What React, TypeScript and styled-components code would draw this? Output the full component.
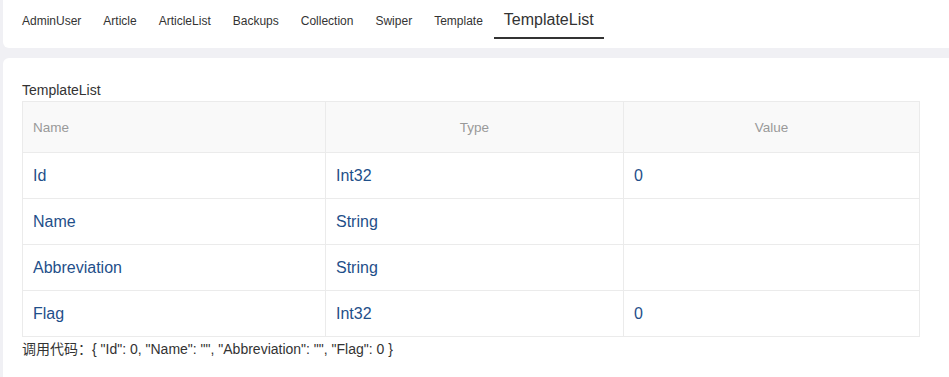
import styled, { createGlobalStyle } from "styled-components"

const GlobalStyle = createGlobalStyle`
  html, body {
    margin: 0;
    padding: 0;
    background: #f0f0f4;
    font-family: "Liberation Sans", Arial, "Noto Sans CJK SC", sans-serif;
    color: #333;
    overflow: hidden;
  }
`

const Page = styled.div`
  display: flex;
  flex-direction: column;
  gap: 10px;
  padding-left: 3px;
  width: 980px;
`

const TabCard = styled.div`
  background: #fff;
  height: 48px;
  border-radius: 0 0 6px 6px;
  padding-left: 8px;
  display: flex;
  align-items: flex-start;
`

const Tab = styled.div<{ $active?: boolean }>`
  padding: 0 ${p => (p.$active ? 10 : 11)}px;
  height: ${p => (p.$active ? 37 : 40)}px;
  line-height: ${p => (p.$active ? 40 : 42)}px;
  font-size: ${p => (p.$active ? 16 : 12)}px;
  color: #333;
  border-bottom: ${p => (p.$active ? "2px solid #333" : "none")};
  white-space: nowrap;
`

const ContentCard = styled.div`
  background: #fff;
  border-radius: 6px 6px 0 0;
  padding: 24px 19px 20px;
  height: 280px;
`

const Title = styled.div`
  font-size: 14px;
  line-height: 16px;
  margin-bottom: 3px;
`

const Table = styled.table`
  width: 898px;
  border-collapse: collapse;
  font-size: 16px;
`

const HeadCell = styled.th<{ $align?: string }>`
  background: #f9f9f9;
  color: #999;
  font-weight: normal;
  font-size: 13.5px;
  height: 50px;
  text-align: ${p => p.$align || "left"};
  padding: 0 10px;
  border: 1px solid #ebebeb;
`

const Cell = styled.td<{ $w?: number }>`
  height: 45px;
  padding: 0 10px;
  color: #1f4f8a;
  border: 1px solid #ebebeb;
  width: ${p => (p.$w ? `${p.$w}px` : "auto")};
`

const Footer = styled.div`
  font-size: 14px;
  line-height: 16px;
  margin-top: 4px;
`

const tabs = ["AdminUser", "Article", "ArticleList", "Backups", "Collection", "Swiper", "Template"]

const rows = [
  { name: "Id", type: "Int32", value: "0" },
  { name: "Name", type: "String", value: "" },
  { name: "Abbreviation", type: "String", value: "" },
  { name: "Flag", type: "Int32", value: "0" },
]

export default function App() {
  return (
    <>
      <GlobalStyle />
      <Page>
        <TabCard>
          {tabs.map(t => (
            <Tab key={t}>{t}</Tab>
          ))}
          <Tab $active>TemplateList</Tab>
        </TabCard>
        <ContentCard>
          <Title>TemplateList</Title>
          <Table>
            <thead>
              <tr>
                <HeadCell>Name</HeadCell>
                <HeadCell $align="center">Type</HeadCell>
                <HeadCell $align="center">Value</HeadCell>
              </tr>
            </thead>
            <tbody>
              {rows.map(r => (
                <tr key={r.name}>
                  <Cell $w={282}>{r.name}</Cell>
                  <Cell $w={277}>{r.type}</Cell>
                  <Cell>{r.value}</Cell>
                </tr>
              ))}
            </tbody>
          </Table>
          <Footer>调用代码：{'{ "Id": 0, "Name": "", "Abbreviation": "", "Flag": 0 }'}</Footer>
        </ContentCard>
      </Page>
    </>
  )
}
